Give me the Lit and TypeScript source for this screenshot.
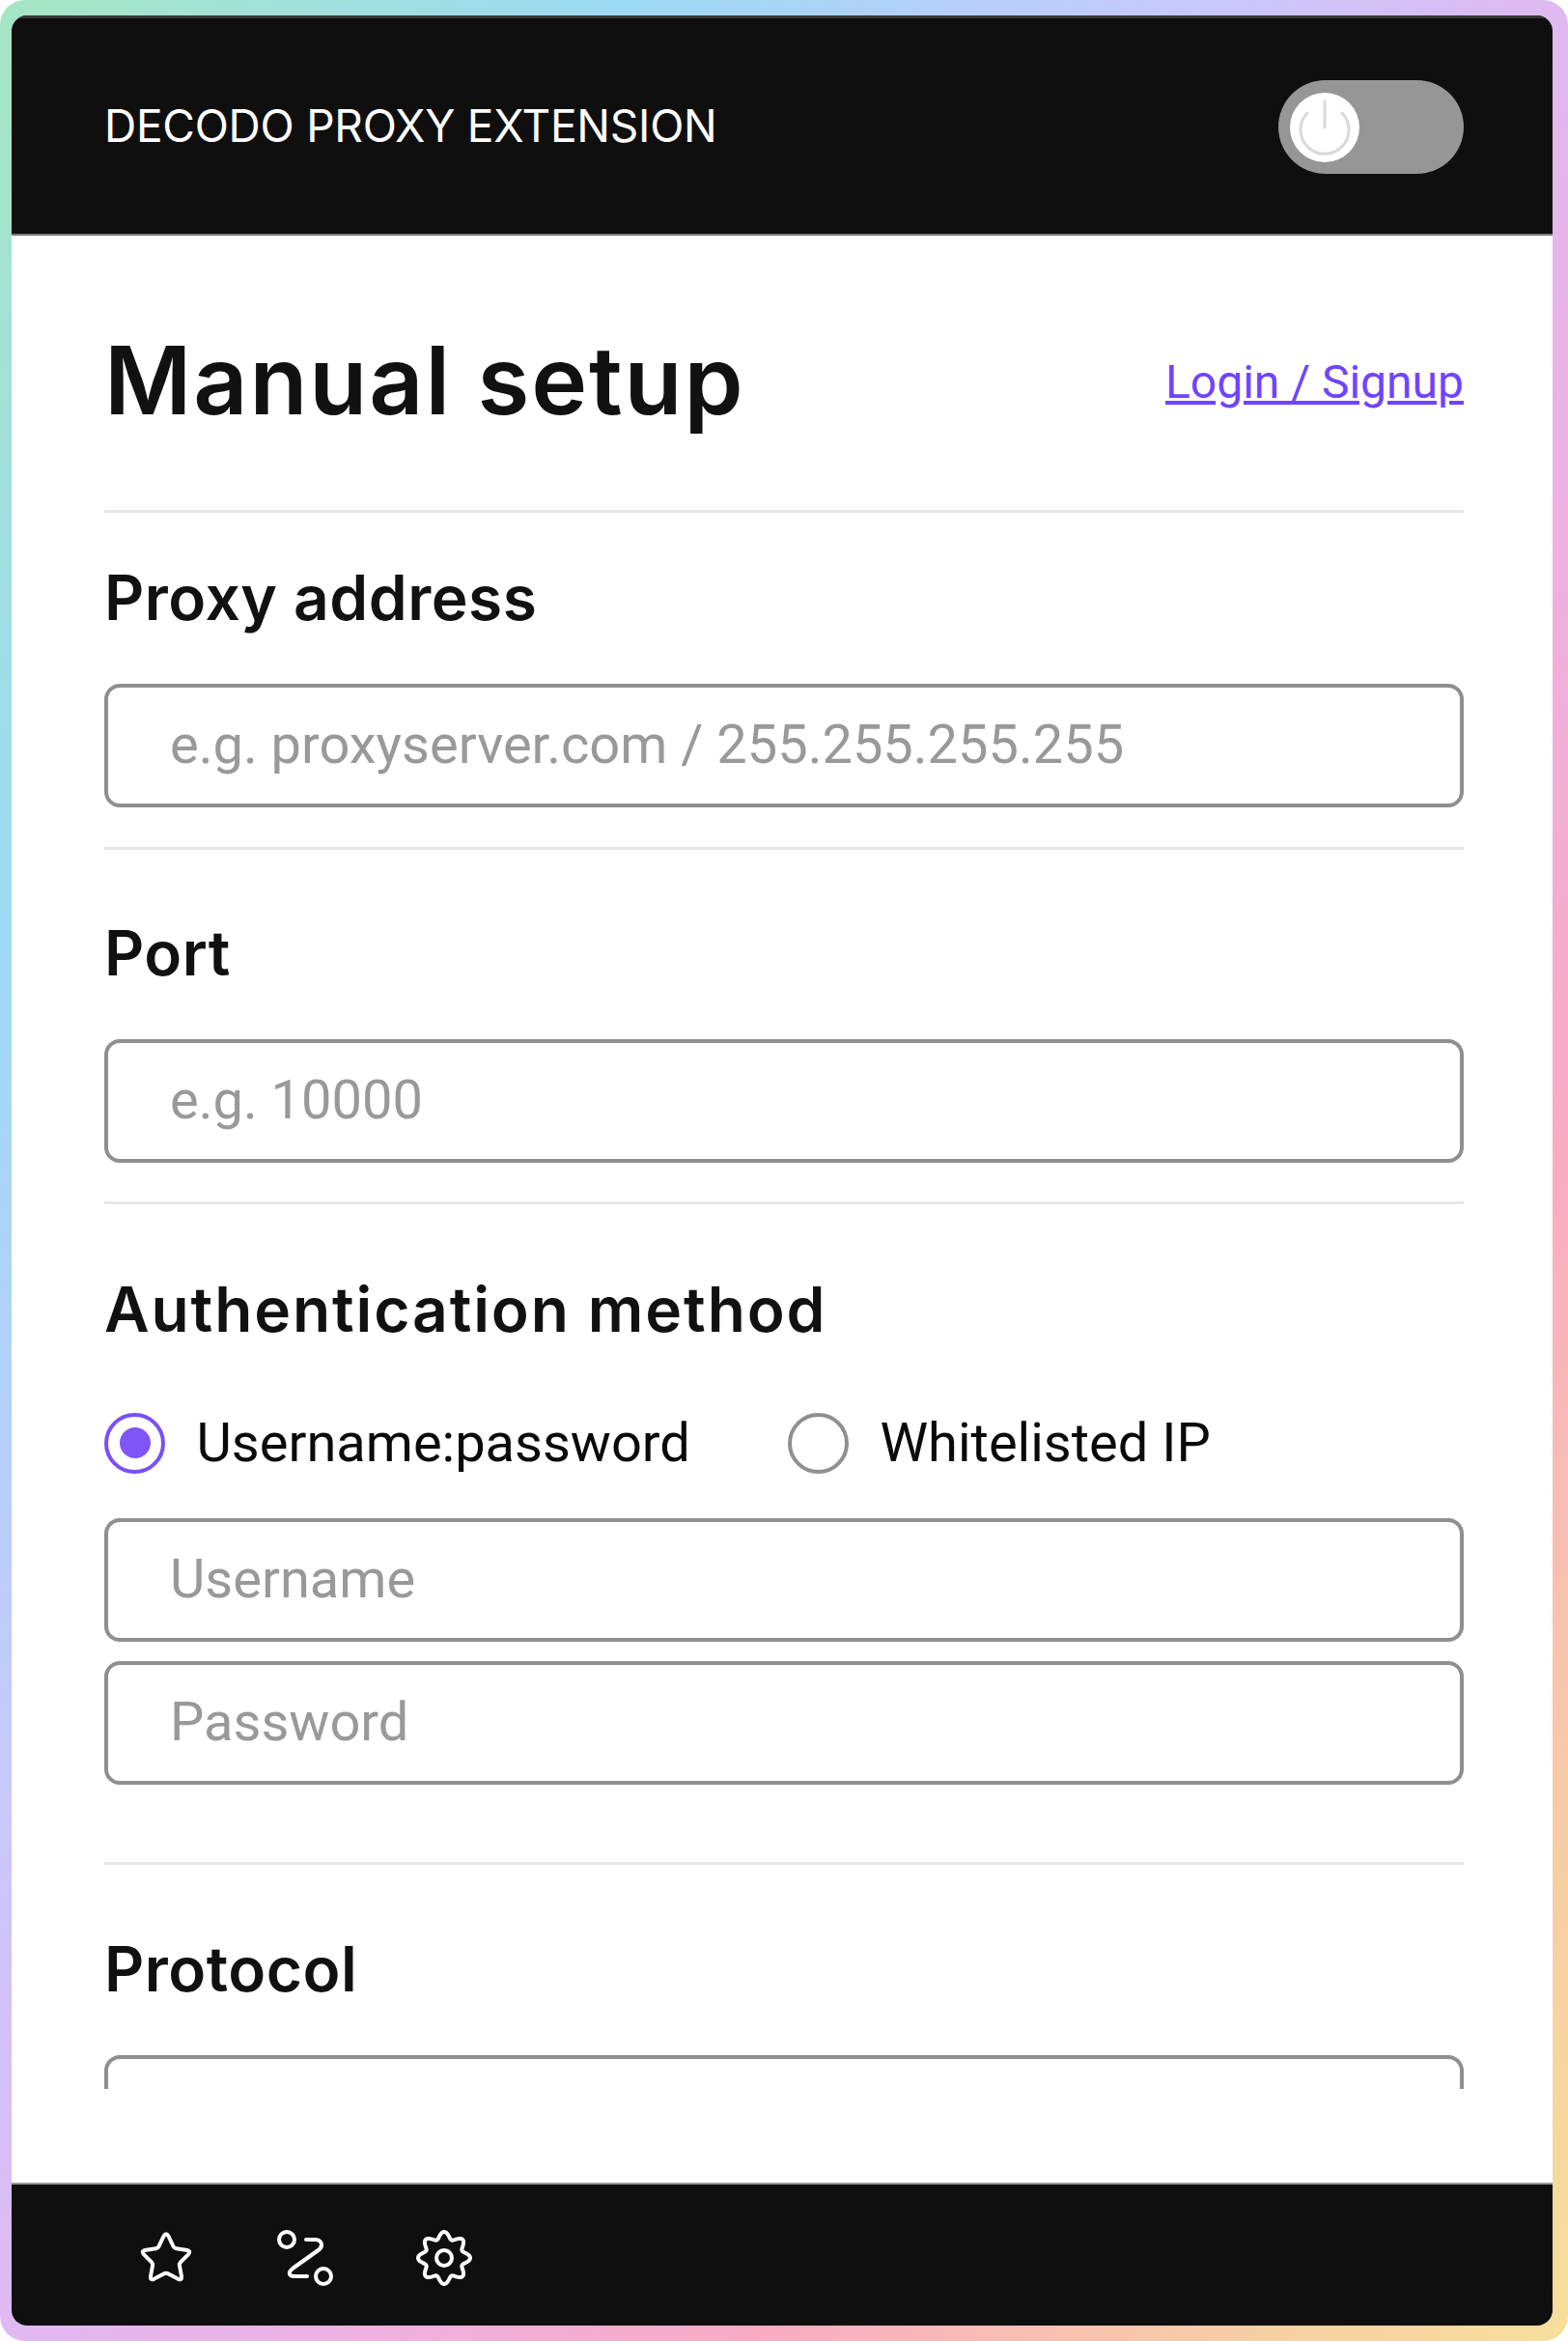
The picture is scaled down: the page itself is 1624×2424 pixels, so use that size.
import { LitElement, html, css, svg } from "lit";
import { customElement } from "lit/decorators.js";

function gearPath(cx: number, cy: number): string {
  const pts: string[] = [];
  for (let i = 0; i < 240; i++) {
    const t = (i / 240) * Math.PI * 2;
    const r = 23.5 + 3.5 * Math.cos(8 * t);
    const a = t - Math.PI / 2;
    pts.push(`${(cx + r * Math.cos(a)).toFixed(2)} ${(cy + r * Math.sin(a)).toFixed(2)}`);
  }
  return "M" + pts.join("L") + "Z";
}

const starIcon = html`<svg class="ico" viewBox="0 0 72 72"><path d="M33.5 13.5Q36 9 38.5 13.5L43.5 24Q44.5 26 46.5 26.3L58 28Q62 29 59 32.3L51 40.3Q49.5 41.8 50 44L52 55Q52.5 59.5 48.500 57.800L38.500 52.500Q36 51.200 33.500 52.500L23.500 57.800Q19.500 59.500 20 55L22 44Q22.500 41.800 21 40.300L13 32.300Q10 29 14 28L25.500 26.300Q27.500 26 28.500 24Z"/></svg>`;
const routeIcon = html`<svg class="ico" viewBox="0 0 72 72"><circle cx="17" cy="17" r="8"/><path d="M37 17H46C53 17 55 23 51 27L23 47C18 51 19 55 25 55H38"/><circle cx="55" cy="55" r="8"/></svg>`;
const gearIcon = html`<svg class="ico" viewBox="0 0 72 72">${svg`<path d=${gearPath(36, 36)}/>`}<circle cx="36" cy="36" r="8"/></svg>`;

@customElement("app-root")
export class AppRoot extends LitElement {
  static styles = css`
    :host {
      display: block;
      width: 1624px;
      height: 2424px;
      background: #fff;
    }
    .frame {
      box-sizing: border-box;
      width: 1624px;
      height: 2424px;
      padding: 16px 16px 16px 12px;
      border-radius: 26px;
      background: linear-gradient(to bottom right, #a4e6c2 0%, #9ddaf4 20%, #c6c8fb 38%, #e0b9f1 50%, #efb0e0 62%, #f9abc4 74%, #f7cfa3 90%, #f6df9a 100%);
    }
    .card {
      height: 100%;
      display: flex;
      flex-direction: column;
      background: #fff;
      border-radius: 16px;
      overflow: hidden;
      font-family: Roboto, sans-serif;
    }
    .head {
      flex: none;
      box-sizing: border-box;
      height: 228px;
      padding: 2px 92px 0 96px;
      display: flex;
      align-items: center;
      justify-content: space-between;
      background: #0f0f0f;
      border-top: 3px solid #383838;
      border-bottom: 2px solid #777;
    }
    .brand {
      margin-bottom: 3px;
      font-family: Inter, sans-serif;
      font-size: 46px;
      font-weight: 400;
      letter-spacing: -0.25px;
      color: #fff;
    }
    .toggle {
      box-sizing: border-box;
      width: 192px;
      height: 97px;
      padding: 13px 12px;
      border-radius: 49px;
      background: #969696;
    }
    .knob {
      display: block;
      width: 72px;
      height: 72px;
      border-radius: 50%;
      background: #fff;
    }
    .knob path {
      fill: none;
      stroke: #d9d9d9;
      stroke-width: 3;
      stroke-linecap: round;
    }
    .main {
      flex: 1;
      min-height: 0;
      padding-bottom: 97px;
      display: flex;
      flex-direction: column;
    }
    .scroll {
      flex: 1;
      min-height: 0;
      overflow: hidden;
      padding: 0 92px 0 96px;
    }
    .top {
      height: 287px;
      box-sizing: border-box;
      padding-top: 14px;
      display: flex;
      align-items: center;
      justify-content: space-between;
      border-bottom: 3px solid #e6e6e6;
    }
    h1 {
      margin: 0;
      font-family: Inter, sans-serif;
      font-size: 98px;
      font-weight: 600;
      letter-spacing: 1.9px;
      color: #111;
    }
    .link {
      margin-top: 5px;
      font-size: 48px;
      color: #7044ff;
      text-decoration: underline;
    }
    .section {
      padding: 60px 0 40px;
      border-bottom: 3px solid #e6e6e6;
    }
    .section.first { padding-top: 41px; padding-bottom: 41px; }
    .section.auth { padding-top: 62px; padding-bottom: 80px; }
    .section.last { border-bottom: 0; padding-top: 61px; padding-bottom: 0; }
    h2 {
      margin: 0 0 46px;
      height: 90px;
      line-height: 94px;
      font-family: Inter, sans-serif;
      font-size: 64px;
      font-weight: 600;
      letter-spacing: 0.5px;
      color: #111;
    }
    .section.auth h2 {
      margin-bottom: 62px;
      letter-spacing: 1.9px;
    }
    .field {
      display: block;
      box-sizing: border-box;
      width: 100%;
      height: 128px;
      padding: 0 64px 2px;
      border: 4px solid #8f8f8f;
      border-radius: 16px;
      background: #fff;
      font-family: Roboto, sans-serif;
      font-size: 56px;
      outline: none;
    }
    .field::placeholder { color: #999; opacity: 1; }
    .field + .field { margin-top: 20px; }
    .radios {
      display: flex;
      gap: 101px;
      margin-bottom: 45px;
    }
    .opt {
      display: flex;
      align-items: center;
      gap: 32.5px;
      font-size: 56px;
      color: #0a0a0a;
    }
    .dot {
      box-sizing: border-box;
      width: 63px;
      height: 63px;
      border-radius: 50%;
      border: 4px solid #8f8f8f;
      display: flex;
      align-items: center;
      justify-content: center;
    }
    .dot.on { border-color: #7a50f8; }
    .dot.on::after {
      content: "";
      width: 32px;
      height: 32px;
      border-radius: 50%;
      background: #7f55f7;
    }
    .foot {
      flex: none;
      box-sizing: border-box;
      height: 148px;
      padding: 40px 0 0 124px;
      display: flex;
      gap: 72px;
      background: #0f0f0f;
      border-top: 2px solid #999;
    }
    .ico {
      display: block;
      width: 72px;
      height: 72px;
      fill: none;
      stroke: #fff;
      stroke-width: 4;
      stroke-linecap: round;
      stroke-linejoin: round;
    }
  `;

  render() {
    return html`
      <div class="frame">
        <div class="card">
          <header class="head">
            <div class="brand">DECODO PROXY EXTENSION</div>
            <div class="toggle">
              <svg class="knob" viewBox="0 0 72 72">
                <path d="M36 9V36"/>
                <path d="M18 21A25 25 0 1 0 54 21"/>
              </svg>
            </div>
          </header>
          <div class="main">
            <div class="scroll">
              <div class="top">
                <h1>Manual setup</h1>
                <a class="link">Login / Signup</a>
              </div>
              <section class="section first">
                <h2>Proxy address</h2>
                <input class="field" placeholder="e.g. proxyserver.com / 255.255.255.255" />
              </section>
              <section class="section">
                <h2>Port</h2>
                <input class="field" placeholder="e.g. 10000" />
              </section>
              <section class="section auth">
                <h2>Authentication method</h2>
                <div class="radios">
                  <div class="opt"><span class="dot on"></span>Username:password</div>
                  <div class="opt"><span class="dot"></span>Whitelisted IP</div>
                </div>
                <input class="field" placeholder="Username" />
                <input class="field" placeholder="Password" />
              </section>
              <section class="section last">
                <h2>Protocol</h2>
                <div class="field"></div>
              </section>
            </div>
          </div>
          <footer class="foot">${starIcon}${routeIcon}${gearIcon}</footer>
        </div>
      </div>
    `;
  }
}
